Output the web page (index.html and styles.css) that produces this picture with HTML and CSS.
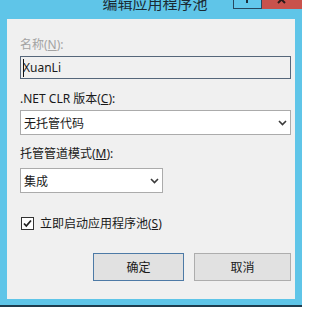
FILE: index.html
```html
<!DOCTYPE html>
<html>
<head>
<meta charset="utf-8">
<link rel="stylesheet" href="styles.css">
</head>
<body>
<div class="window">
  <div class="titlebar">
    <div class="title">编辑应用程序池</div>
    <div class="caption">
      <div class="cap-help"><svg width="27" height="8" viewBox="0 0 27 8"><rect x="12" y="0" width="2" height="3" fill="#1d2f3c"/></svg></div>
      <div class="cap-close"><svg width="40" height="9" viewBox="0 0 40 9"><path d="M16 -4 L23 3 M23 -4 L16 3" stroke="#2a1a1a" stroke-width="2" fill="none"/></svg></div>
    </div>
  </div>
  <div class="client">
    <div class="label disabled l1">名称(<u>N</u>):</div>
    <div class="textbox"><span class="caret"></span><span class="tb-text">XuanLi</span></div>
    <div class="label l2">.NET CLR 版本(<u>C</u>):</div>
    <div class="select wide"><span>无托管代码</span><svg class="chev" width="9" height="6" viewBox="0 0 9 6"><polyline points="1,1 4.5,4.5 8,1" fill="none" stroke="#3a3a3a" stroke-width="1.6"/></svg></div>
    <div class="label l3">托管管道模式(<u>M</u>):</div>
    <div class="select narrow"><span>集成</span><svg class="chev" width="9" height="6" viewBox="0 0 9 6"><polyline points="1,1 4.5,4.5 8,1" fill="none" stroke="#3a3a3a" stroke-width="1.6"/></svg></div>
    <div class="check-row"><span class="checkbox"><svg width="11" height="11" viewBox="0 0 11 11"><path d="M2 5.5 L4.3 8 L9 2.5" fill="none" stroke="#222" stroke-width="1.8"/></svg></span><span>立即启动应用程序池(<u>S</u>)</span></div>
    <div class="buttons">
      <div class="btn ok">确定</div>
      <div class="btn cancel">取消</div>
    </div>
  </div>
</div>
</body>
</html>
```
FILE: styles.css
```css
body {
  margin: 0;
  background: #ffffff;
  font-family: "Noto Sans", "Noto Sans CJK SC", sans-serif;
  font-size: 12px;
  color: #1a1a1a;
}
.window {
  width: 302px;
  height: 305px;
  background: #5fc5e8;
  border-bottom: 2px solid #1f3c4e;
  display: flex;
  flex-direction: column;
}
.titlebar {
  height: 19px;
  display: grid;
  overflow: hidden;
  flex: none;
}
.title, .caption {
  grid-area: 1 / 1;
}
.title {
  justify-self: center;
  padding-left: 8px;
  font-family: "Noto Sans CJK SC", sans-serif;
  font-size: 15px;
  line-height: 15px;
  margin-top: -5px;
  color: #1b2a33;
  white-space: nowrap;
}
.caption {
  justify-self: end;
  align-self: start;
  display: flex;
}
.cap-help {
  width: 29px;
  height: 9px;
  box-sizing: border-box;
  border: 1px solid #284860;
  border-top: 0;
  background: #62c8ec;
  display: flex;
}
.cap-close {
  width: 40px;
  height: 9px;
  background: #c9524c;
  display: flex;
}
.client {
  margin: 0 7px;
  height: 280px;
  flex: none;
  background: #f0f0f0;
  box-sizing: border-box;
  padding: 18px 4px 0 13px;
  display: flex;
  flex-direction: column;
  align-items: flex-start;
}
.label {
  line-height: 16px;
  height: 16px;
  white-space: nowrap;
}
.label.disabled {
  color: #a3a3a3;
}
.l1 {
  margin-bottom: 3px;
}
.textbox {
  width: 271px;
  height: 23px;
  box-sizing: border-box;
  border: 1px solid #55667a;
  background: #f0f0f0;
  display: flex;
  align-items: center;
  padding-left: 2px;
}
.caret {
  width: 1px;
  height: 18px;
  background: #111;
  margin-right: -1px;
}
.l2 {
  margin-top: 12px;
  margin-bottom: 3px;
}
.select {
  height: 25px;
  box-sizing: border-box;
  border: 1px solid #ababab;
  background: #ffffff;
  display: flex;
  align-items: center;
  justify-content: space-between;
  padding: 0 3px 0 3px;
}
.select.wide {
  width: 271px;
}
.select.narrow {
  width: 143px;
}
.l3 {
  margin-top: 11px;
  margin-bottom: 6px;
}
.check-row {
  margin-top: 22px;
  display: flex;
  align-items: center;
  gap: 6px;
  height: 16px;
  padding-left: 1px;
  white-space: nowrap;
}
.checkbox {
  width: 13px;
  height: 13px;
  box-sizing: border-box;
  border: 1px solid #333;
  background: #fff;
  display: flex;
}
.buttons {
  margin-top: 22px;
  align-self: flex-end;
  display: flex;
  gap: 10px;
}
.btn {
  height: 28px;
  box-sizing: border-box;
  border: 1px solid #adadad;
  background: #e1e1e1;
  display: flex;
  align-items: center;
  justify-content: center;
}
.btn.ok {
  width: 91px;
  border-color: #4d7aa6;
}
.btn.cancel {
  width: 97px;
}
```
